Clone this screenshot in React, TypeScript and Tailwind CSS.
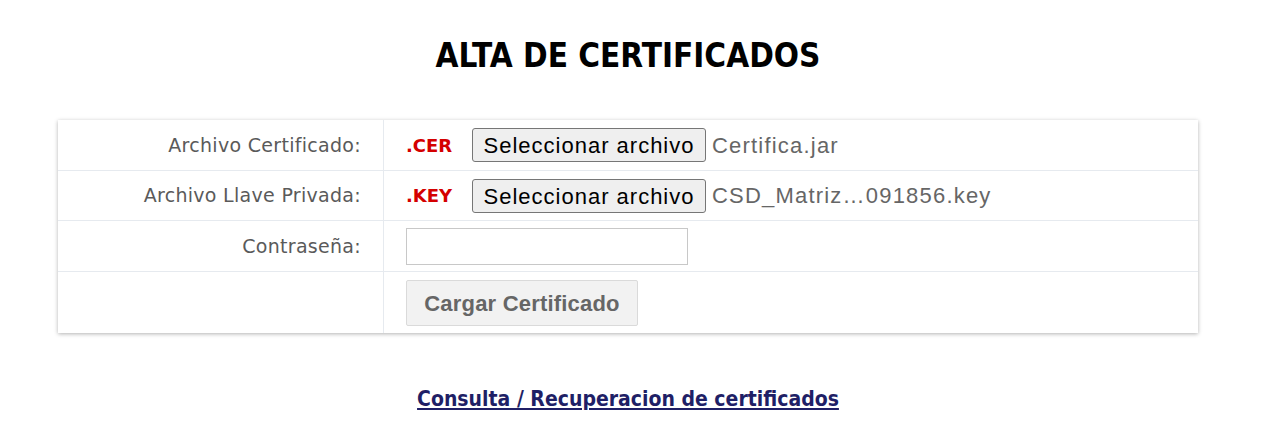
const labelFont = { fontFamily: '"DejaVu Sans", sans-serif' };

function FileField({ ext, file }: { ext: string; file: string }) {
  return (
    <div className="flex items-center">
      <span className="w-[66px] text-[18px] font-bold text-[#d40000]">{ext}</span>
      <button
        type="button"
        className="h-[34px] w-[234px] rounded-[3px] border border-[#767676] bg-[#efefef] font-['Liberation_Sans',sans-serif] text-[22px] tracking-[1px] text-black"
      >
        Seleccionar archivo
      </button>
      <span className="ml-[6px] font-['Liberation_Sans',sans-serif] text-[22px] tracking-[1.2px] text-[#666]">{file}</span>
    </div>
  );
}

export default function App() {
  return (
    <main className="min-h-[436px] w-[1256px] bg-white" style={labelFont}>
      <h1 className="pt-[36px] text-center font-['DejaVu_Sans_Condensed','DejaVu_Sans',sans-serif] text-[33px] font-bold leading-[40px] text-black">
        ALTA DE CERTIFICADOS
      </h1>

      <div className="mx-[58px] mt-[44px] w-[1140px] bg-white shadow-[0_1px_4px_rgba(0,0,0,0.3)]">
        <div className="grid grid-cols-[326px_1fr]">
          {/* Certificado */}
          <div className="flex h-[50px] items-center justify-end border-r border-[#e6eaef] pr-[22px] text-[19px] tracking-[0.3px] text-[#5a5a5a]">
            Archivo Certificado:
          </div>
          <div className="flex h-[50px] items-center pl-[22px]">
            <FileField ext=".CER" file="Certifica.jar" />
          </div>

          {/* Llave */}
          <div className="flex h-[50px] items-center justify-end border-r border-t border-[#e6eaef] pr-[22px] text-[19px] tracking-[0.3px] text-[#5a5a5a]">
            Archivo Llave Privada:
          </div>
          <div className="flex h-[50px] items-center border-t border-[#e6eaef] pl-[22px]">
            <FileField ext=".KEY" file="CSD_Matriz…091856.key" />
          </div>

          {/* Contraseña */}
          <div className="flex h-[51px] items-center justify-end border-r border-t border-[#e6eaef] pr-[22px] text-[19px] tracking-[0.3px] text-[#5a5a5a]">
            Contraseña:
          </div>
          <div className="flex h-[51px] items-center border-t border-[#e6eaef] pl-[22px]">
            <input type="password" className="h-[37px] w-[282px] border border-[#c8c8c8] bg-white outline-none" />
          </div>

          {/* Boton */}
          <div className="h-[62px] border-r border-t border-[#e6eaef]" />
          <div className="flex h-[62px] items-start border-t border-[#e6eaef] pl-[22px] pt-[8px]">
            <button
              type="button"
              className="h-[46px] w-[232px] rounded-[2px] border border-[#dadada] bg-[#f2f2f2] font-['Liberation_Sans',sans-serif] text-[22px] font-bold tracking-[0.2px] text-[#666]"
            >
              Cargar Certificado
            </button>
          </div>
        </div>
      </div>

      <div className="mt-[51px] text-center">
        <a
          href="#"
          className="font-['DejaVu_Sans_Condensed','DejaVu_Sans',sans-serif] text-[21px] font-bold text-[#1f1f66] underline"
        >
          Consulta / Recuperacion de certificados
        </a>
      </div>
    </main>
  );
}
